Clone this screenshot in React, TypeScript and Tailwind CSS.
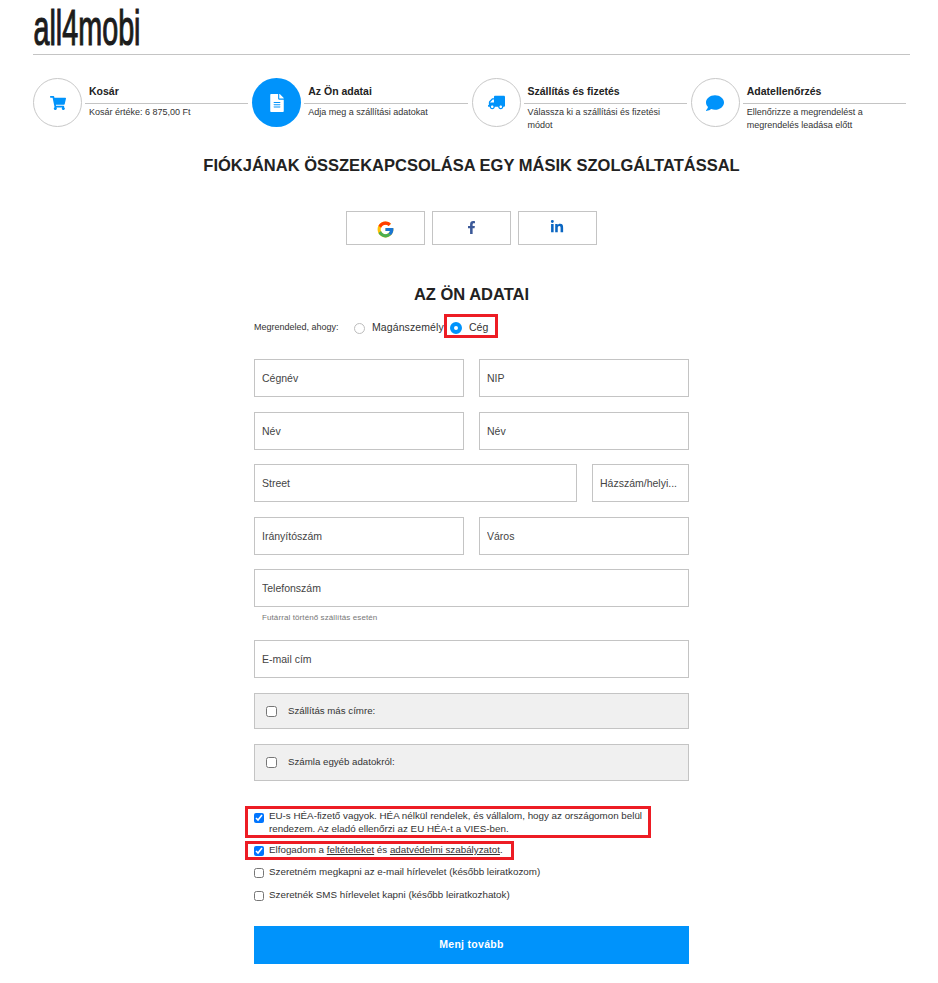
import { FaShoppingCart, FaFileAlt, FaTruck, FaComment, FaFacebookF, FaLinkedinIn } from "react-icons/fa";
import { FcGoogle } from "react-icons/fc";
import type { ReactNode } from "react";

function Step({ icon, title, sub, active }: { icon: ReactNode; title: string; sub: ReactNode; active?: boolean }) {
  return (
    <div className="flex h-[49px] items-start">
      <div
        className={
          active
            ? "flex h-[49px] w-[49px] shrink-0 items-center justify-center rounded-full bg-[#0093fb] text-white"
            : "flex h-[49px] w-[49px] shrink-0 items-center justify-center rounded-full border border-[#c8c8c8] bg-white text-[#0093fb]"
        }
      >
        {icon}
      </div>
      <div className="ml-[3px] mr-[4px] flex-1">
        <div className="h-[26px] border-b border-[#c4c4c4] pl-[4px] pt-[6px] text-[10.5px] font-bold leading-[14px] text-[#222]">{title}</div>
        <div className="pl-[4px] pt-[2px] text-[9px] leading-[12.5px] text-[#333]">{sub}</div>
      </div>
    </div>
  );
}

function Field({ label, className }: { label: string; className: string }) {
  return (
    <input
      readOnly
      placeholder={label}
      className={`h-[38px] min-w-0 border border-[#c4c4c4] bg-white px-[7px] text-[10.5px] outline-none placeholder:text-[#444] ${className}`}
    />
  );
}

function Box({ label, tall }: { label: string; tall?: boolean }) {
  return (
    <label className={`flex items-center border border-[#c4c4c4] bg-[#f0f0f0] pl-[11px] text-[9.7px] text-[#333] ${tall ? "h-[37px]" : "h-[36px]"}`}>
      <input type="checkbox" readOnly className="m-0 h-[11px] w-[11px] accent-[#0075ff]" />
      <span className="ml-[11px]">{label}</span>
    </label>
  );
}

export default function App() {
  return (
    <div className="h-[983px] w-[938px] overflow-hidden bg-white font-['Liberation_Sans',Arial,sans-serif] text-[#222]">
      <div className="mx-[33px] w-[877px]">
        <header className="h-[55px] border-b border-[#c4c4c4]">
          <svg width="240" height="50" viewBox="0 0 240 50" className="block">
            <text
              x="0.5"
              y="45"
              textLength="107"
              lengthAdjust="spacingAndGlyphs"
              fontSize="50"
              fontFamily="'Liberation Sans Narrow','Liberation Sans',sans-serif"
              fill="#1c1c1c"
              stroke="#1c1c1c"
              strokeWidth="1.2"
            >
              all4mobi
            </text>
          </svg>
        </header>

        <div className="mt-[23px] grid grid-cols-4">
          <Step icon={<FaShoppingCart size={16} />} title="Kosár" sub="Kosár értéke: 6 875,00 Ft" />
          <Step active icon={<FaFileAlt size={18} />} title="Az Ön adatai" sub="Adja meg a szállítási adatokat" />
          <Step icon={<FaTruck size={17} className="-scale-x-100" />} title="Szállítás és fizetés" sub="Válassza ki a szállítási és fizetési módot" />
          <Step icon={<FaComment size={18} />} title="Adatellenőrzés" sub="Ellenőrizze a megrendelést a megrendelés leadása előtt" />
        </div>

        <h1 className="mt-[29px] text-center text-[16.5px] font-bold leading-[18px] text-[#222]">
          FIÓKJÁNAK ÖSSZEKAPCSOLÁSA EGY MÁSIK SZOLGÁLTATÁSSAL
        </h1>

        <div className="mt-[37px] flex justify-center gap-[7px] pr-[1px]">
          <button className="flex h-[34px] w-[79px] items-center justify-center border border-[#c4c4c4] bg-white pt-[2px]"><FcGoogle size={19} /></button>
          <button className="flex h-[34px] w-[79px] items-center justify-center border border-[#c4c4c4] bg-white pb-[2px] text-[#3b5998]"><FaFacebookF size={13} /></button>
          <button className="flex h-[34px] w-[79px] items-center justify-center border border-[#c4c4c4] bg-white pb-[2px] text-[#0a66c2]"><FaLinkedinIn size={14} /></button>
        </div>

        <h2 className="mt-[40px] text-center text-[16.5px] font-bold leading-[18px] text-[#222]">AZ ÖN ADATAI</h2>

        <form className="ml-[221px] w-[435px]">
          <div className="mt-[18px] flex h-[14px] items-center text-[12px]">
            <span className="w-[100px] text-[9px] text-[#333]">Megrendeled, ahogy:</span>
            <span className="h-[11px] w-[11px] rounded-full border border-[#bdbdbd] bg-white" />
            <span className="ml-[7px] w-[78px] text-[10.5px] tracking-[0.1px] text-[#333]">Magánszemély</span>
            <span className="relative flex items-center">
              <span className="absolute left-[-6px] top-[-6px] h-[24px] w-[54px] border-[3px] border-[#ed1c24]" />
              <span className="h-[12px] w-[12px] rounded-full border-[4px] border-[#0093fb] bg-white" />
              <span className="ml-[7px] text-[10.5px] text-[#333]">Cég</span>
            </span>
          </div>

          <div className="mt-[24px] flex gap-[15px]">
            <Field label="Cégnév" className="w-[210px]" />
            <Field label="NIP" className="w-[210px]" />
          </div>
          <div className="mt-[15px] flex gap-[15px]">
            <Field label="Név" className="w-[210px]" />
            <Field label="Név" className="w-[210px]" />
          </div>
          <div className="mt-[14px] flex gap-[15px]">
            <Field label="Street" className="w-[323px]" />
            <Field label="Házszám/helyi..." className="w-[97px] px-[6px]" />
          </div>
          <div className="mt-[15px] flex gap-[15px]">
            <Field label="Irányítószám" className="w-[210px]" />
            <Field label="Város" className="w-[210px]" />
          </div>
          <Field label="Telefonszám" className="mt-[14px] block w-[435px]" />
          <p className="mt-[6px] pl-[8px] text-[8px] leading-[10px] tracking-[0.1px] text-[#777]">Futárral történő szállítás esetén</p>
          <Field label="E-mail cím" className="mt-[17px] block w-[435px]" />

          <div className="mt-[15px]"><Box label="Szállítás más címre:" /></div>
          <div className="mt-[15px]"><Box tall label="Számla egyéb adatokról:" /></div>

          <div className="mt-[25px] text-[9.8px] leading-[12.5px] text-[#333]">
            <label className="relative flex h-[32px] items-start pt-[4px]">
              <span className="absolute left-[-9px] top-0 h-[32px] w-[406px] border-[3px] border-[#ed1c24]" />
              <input type="checkbox" checked readOnly className="m-0 mt-[3px] h-[10px] w-[10px] shrink-0 accent-[#0075ff]" />
              <span className="ml-[5px] w-[380px]">EU-s HÉA-fizető vagyok. HÉA nélkül rendelek, és vállalom, hogy az országomon belül rendezem. Az eladó ellenőrzi az EU HÉA-t a VIES-ben.</span>
            </label>
            <label className="relative mt-[3px] flex h-[19px] items-center">
              <span className="absolute left-[-9px] top-0 h-[19px] w-[269px] border-[3px] border-[#ed1c24]" />
              <input type="checkbox" checked readOnly className="m-0 h-[10px] w-[10px] shrink-0 accent-[#0075ff]" />
              <span className="ml-[5px]">Elfogadom a <u>feltételeket</u> és <u>adatvédelmi szabályzatot</u>.</span>
            </label>
            <label className="mt-[3px] flex h-[19px] items-center">
              <input type="checkbox" readOnly className="m-0 h-[10px] w-[10px] shrink-0 accent-[#0075ff]" />
              <span className="ml-[5px]">Szeretném megkapni az e-mail hírlevelet (később leiratkozom)</span>
            </label>
            <label className="mt-[4px] flex h-[19px] items-center">
              <input type="checkbox" readOnly className="m-0 h-[10px] w-[10px] shrink-0 accent-[#0075ff]" />
              <span className="ml-[5px]">Szeretnék SMS hírlevelet kapni (később leiratkozhatok)</span>
            </label>
          </div>

          <button type="button" className="mt-[21px] h-[38px] w-[435px] bg-[#0093fb] text-[10.5px] font-bold tracking-[0.3px] text-white">Menj tovább</button>
        </form>
      </div>
    </div>
  );
}
